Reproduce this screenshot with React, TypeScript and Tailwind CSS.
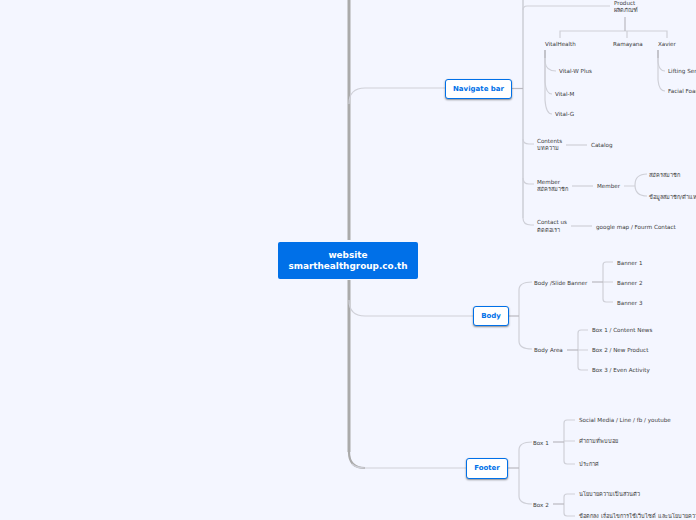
import React from 'react';

type Label = { x: number; y: number; text: string };

const labels: Label[] = [
  { x: 614, y: 2.5, text: 'Product' },
  { x: 614, y: 9.5, text: 'ผลิตภัณฑ์' },
  { x: 545, y: 44, text: 'VitalHealth' },
  { x: 613, y: 44, text: 'Ramayana' },
  { x: 658, y: 44, text: 'Xavier' },
  { x: 559, y: 71, text: 'Vital-W Plus' },
  { x: 555, y: 94, text: 'Vital-M' },
  { x: 555, y: 114, text: 'Vital-G' },
  { x: 668, y: 71, text: 'Lifting Serum' },
  { x: 668, y: 91, text: 'Facial Foam' },
  { x: 537, y: 141, text: 'Contents' },
  { x: 537, y: 148, text: 'บทความ' },
  { x: 591, y: 145, text: 'Catalog' },
  { x: 537, y: 182, text: 'Member' },
  { x: 537, y: 188.5, text: 'สมัครสมาชิก' },
  { x: 597, y: 186, text: 'Member' },
  { x: 649, y: 175, text: 'สมัครสมาชิก' },
  { x: 649, y: 197, text: 'ข้อมูลสมาชิก/ตำแหน่ง' },
  { x: 537, y: 222, text: 'Contact us' },
  { x: 537, y: 229.5, text: 'ติดต่อเรา' },
  { x: 596, y: 227, text: 'google map / Fourm Contact' },
  { x: 534, y: 283, text: 'Body /Slide Banner' },
  { x: 617, y: 263, text: 'Banner 1' },
  { x: 617, y: 283, text: 'Banner 2' },
  { x: 617, y: 303, text: 'Banner 3' },
  { x: 534, y: 350, text: 'Body Area' },
  { x: 592, y: 330, text: 'Box 1 / Content News' },
  { x: 592, y: 350, text: 'Box 2 / New Product' },
  { x: 592, y: 370, text: 'Box 3 / Even Activity' },
  { x: 533, y: 443, text: 'Box 1' },
  { x: 533, y: 505, text: 'Box 2' },
  { x: 579, y: 420, text: 'Social Media / Line / fb / youtube' },
  { x: 579, y: 441, text: 'คำถามที่พบบ่อย' },
  { x: 579, y: 464, text: 'ประกาศ' },
  { x: 579, y: 494, text: 'นโยบายความเป็นส่วนตัว' },
  { x: 579, y: 516, text: 'ข้อตกลง เงื่อนไขการใช้เว็บไซต์ และนโยบายความเป็นส่วนตัว' },
];

const lightLines = [
  // top level branches
  'M349 104 Q349 88 365 88 H445',
  'M349 300 Q349 316 365 316 H473',
  'M352 464 Q356 468 365 468 H466',
  // navigate bar
  'M523 10 Q523 6 527 6 H610',
  'M523 139 Q523 144 529 144 H534',
  'M523 178 Q523 184 529 184 H534',
  'M523 218 Q523 225 531 225 H534',
  'M566 145 H587',
  'M572 186 H593',
  'M571 226 H592',
  'M625 31 H560 V38 M625 31 H667 V38 M627 31 V38',
  'M545 50 V62 Q546 71 556 71',
  'M545 50 V82 Q546 94 552 94',
  'M545 50 V100 Q546 114 552 114',
  'M658 50 V62 Q659 71 665 71',
  'M658 50 V80 Q659 91 665 91',
  'M624 186 H635 M647 174 Q635 174 635 185 Q635 196 647 196',
  // body
  'M532 282 Q519 282 519 290 V341 Q519 349 532 349',
  'M613 262 H606 Q603 262 603 265 V299 Q603 302 606 302 H613 M603 282 H613',
  'M588 330 H581 Q578 330 578 333 V367 Q578 370 581 370 H588 M578 350 H588',
  // footer
  'M532 442 Q519 442 519 450 V496 Q519 504 532 504',
  'M575 420 H567 Q564 420 564 423 V461 Q564 464 567 464 H575 M564 441 H575',
  'M575 494 H567 Q564 494 564 497 V513 Q564 516 567 516 H575',
];

const darkLines = [
  'M512 88.5 H523',
  'M509 316 H519',
  'M508 468 H519',
  'M625 17 V31',
  'M545 50 V58',
  'M658 50 V58',
  'M592 282 H603',
  'M567 350 H578',
  'M553 442 H564',
  'M553 504 H564',
];

function Branch({ x, y, w, h, text }: { x: number; y: number; w: number; h: number; text: string }) {
  return (
    <div
      className="absolute flex items-center justify-center rounded-[3px] border-[1.5px] border-[#0070e8] bg-white text-[7px] font-bold text-[#0070e8] shadow-[0_1px_2px_rgba(0,0,0,0.45)]"
      style={{ left: x, top: y, width: w, height: h }}
    >
      {text}
    </div>
  );
}

export default function App() {
  return (
    <div className="relative h-[520px] w-[696px] overflow-hidden bg-[#f4f6ff] font-['DejaVu_Sans','Noto_Sans',sans-serif] antialiased">
      <svg className="absolute inset-0" width={696} height={520} fill="none">
        <path d="M349 0 V240 M349 280 V452" stroke="#aaaaaa" strokeWidth={3} />
        <path d="M349 452 Q349 468 365 468" stroke="#aaaaaa" strokeWidth={2.2} />
        <path d="M523 0 V218" stroke="#cdced6" strokeWidth={1.5} />
        {lightLines.map((d) => (
          <path key={d} d={d} stroke="#cfd0d8" strokeWidth={1.2} />
        ))}
        {darkLines.map((d) => (
          <path key={d} d={d} stroke="#b9b9c0" strokeWidth={1.2} />
        ))}
      </svg>

      <div className="absolute left-[278px] top-[242px] flex h-[37px] w-[140px] flex-col items-center justify-center rounded-[2px] bg-[#0070e8] text-center text-[8.9px] font-bold leading-[11px] text-white">
        <span>website</span>
        <span>smarthealthgroup.co.th</span>
      </div>

      <Branch x={445} y={79} w={67} h={20} text="Navigate bar" />
      <Branch x={473} y={306} w={36} h={20} text="Body" />
      <Branch x={466} y={458} w={42} h={21} text="Footer" />

      {labels.map((l) => (
        <span
          key={`${l.x}-${l.y}`}
          className="absolute -translate-y-1/2 whitespace-nowrap text-[5.6px] leading-[8px] text-[#3a3a3a]"
          style={{ left: l.x, top: l.y }}
        >
          {l.text}
        </span>
      ))}
    </div>
  );
}
